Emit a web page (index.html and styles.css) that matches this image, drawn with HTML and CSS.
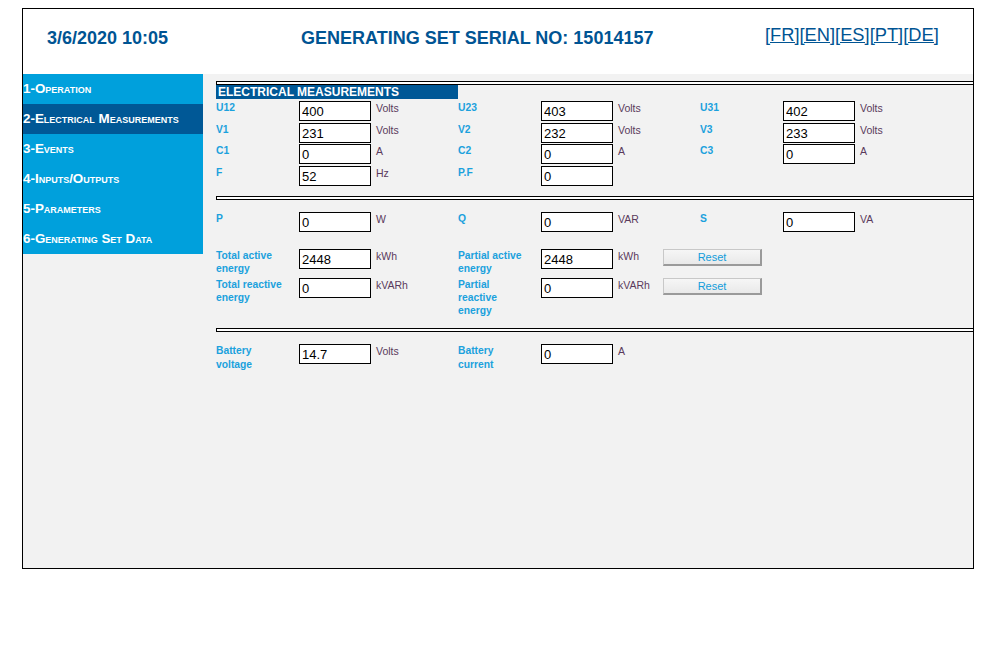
FILE: index.html
```html
<!DOCTYPE html>
<html>
<head>
<meta charset="utf-8">
<link rel="stylesheet" href="styles.css">
</head>
<body>
<div class="frame">
  <header class="top">
    <div class="date">3/6/2020 10:05</div>
    <div class="title">GENERATING SET SERIAL NO: 15014157</div>
    <div class="langs"><a href="#">[FR]</a><a href="#">[EN]</a><a href="#">[ES]</a><a href="#">[PT]</a><a href="#">[DE]</a></div>
  </header>
  <div class="main">
    <nav class="side">
      <a class="item" href="#">1-Operation</a>
      <a class="item active" href="#">2-Electrical Measurements</a>
      <a class="item" href="#">3-Events</a>
      <a class="item" href="#">4-Inputs/Outputs</a>
      <a class="item" href="#">5-Parameters</a>
      <a class="item" href="#">6-Generating Set Data</a>
    </nav>
    <section class="content">
      <div class="sep"></div>
      <div class="heading">ELECTRICAL MEASUREMENTS</div>
      <div class="rows first">
        <div class="row">
          <div class="grp"><span class="lbl">U12</span><input class="val" value="400" readonly><span class="unit">Volts</span></div>
          <div class="grp"><span class="lbl">U23</span><input class="val" value="403" readonly><span class="unit">Volts</span></div>
          <div class="grp"><span class="lbl">U31</span><input class="val" value="402" readonly><span class="unit">Volts</span></div>
        </div>
        <div class="row">
          <div class="grp"><span class="lbl">V1</span><input class="val" value="231" readonly><span class="unit">Volts</span></div>
          <div class="grp"><span class="lbl">V2</span><input class="val" value="232" readonly><span class="unit">Volts</span></div>
          <div class="grp"><span class="lbl">V3</span><input class="val" value="233" readonly><span class="unit">Volts</span></div>
        </div>
        <div class="row">
          <div class="grp"><span class="lbl">C1</span><input class="val" value="0" readonly><span class="unit">A</span></div>
          <div class="grp"><span class="lbl">C2</span><input class="val" value="0" readonly><span class="unit">A</span></div>
          <div class="grp"><span class="lbl">C3</span><input class="val" value="0" readonly><span class="unit">A</span></div>
        </div>
        <div class="row">
          <div class="grp"><span class="lbl">F</span><input class="val" value="52" readonly><span class="unit">Hz</span></div>
          <div class="grp"><span class="lbl">P.F</span><input class="val" value="0" readonly><span class="unit"></span></div>
        </div>
      </div>
      <div class="sep"></div>
      <div class="rows power">
        <div class="row">
          <div class="grp"><span class="lbl">P</span><input class="val" value="0" readonly><span class="unit">W</span></div>
          <div class="grp"><span class="lbl">Q</span><input class="val" value="0" readonly><span class="unit">VAR</span></div>
          <div class="grp"><span class="lbl">S</span><input class="val" value="0" readonly><span class="unit">VA</span></div>
        </div>
      </div>
      <div class="rows energy">
        <div class="row">
          <div class="grp"><span class="lbl">Total active energy</span><input class="val" value="2448" readonly><span class="unit">kWh</span></div>
          <div class="grp wide"><span class="lbl">Partial active energy</span><input class="val" value="2448" readonly><span class="unit fixed">kWh</span><button class="reset" type="button">Reset</button></div>
        </div>
        <div class="row">
          <div class="grp"><span class="lbl">Total reactive energy</span><input class="val" value="0" readonly><span class="unit">kVARh</span></div>
          <div class="grp wide"><span class="lbl">Partial reactive energy</span><input class="val" value="0" readonly><span class="unit fixed">kVARh</span><button class="reset" type="button">Reset</button></div>
        </div>
      </div>
      <div class="sep"></div>
      <div class="rows battery">
        <div class="row">
          <div class="grp"><span class="lbl">Battery voltage</span><input class="val" value="14.7" readonly><span class="unit">Volts</span></div>
          <div class="grp"><span class="lbl">Battery current</span><input class="val" value="0" readonly><span class="unit">A</span></div>
        </div>
      </div>
    </section>
  </div>
</div>
</body>
</html>
```

FILE: styles.css
```css
html, body {
  margin: 0;
  padding: 0;
  background: #ffffff;
}
body {
  padding: 8px 0 0 22px;
  font-family: "Liberation Sans", Arial, Helvetica, sans-serif;
}
.frame {
  width: 950px;
  height: 559px;
  border: 1px solid #000;
  background: #f2f2f2;
  display: flex;
  flex-direction: column;
}
.top {
  height: 65px;
  background: #ffffff;
  display: grid;
  grid-template-columns: 278px 464px 1fr;
  align-items: start;
  color: #005493;
  font-size: 18px;
}
.date {
  padding: 19px 0 0 24px;
  font-weight: bold;
}
.title {
  padding-top: 19px;
  font-weight: bold;
}
.langs {
  padding-top: 15px;
  font-size: 18.3px;
}
.langs a {
  color: #005493;
  text-decoration: underline;
}
.main {
  display: flex;
  flex: 1;
  align-items: flex-start;
}
.side {
  width: 180px;
  flex: none;
  background: #00a0dc;
  display: flex;
  flex-direction: column;
}
.item {
  height: 30px;
  line-height: 30px;
  color: #ffffff;
  text-decoration: none;
  font-weight: bold;
  font-size: 13.4px;
  font-variant: small-caps;
  white-space: nowrap;
}
.item.active {
  background: #005896;
}
.content {
  flex: 1;
  padding: 7px 0 0 13px;
}
.sep {
  height: 2px;
  border: 1px solid #000;
  border-right: 0;
  background: #ffffff;
}
.heading {
  width: 240px;
  height: 14px;
  line-height: 14px;
  padding-left: 2px;
  background: #005896;
  color: #ffffff;
  font-weight: bold;
  font-size: 12px;
  margin-bottom: 2px;
}
.rows {
  display: flex;
  flex-direction: column;
}
.rows.first {
  gap: 1.5px;
  margin-bottom: 10.5px;
}
.rows.power {
  margin-top: 12px;
  margin-bottom: 17px;
}
.rows.energy {
  gap: 2px;
  margin-bottom: 11px;
}
.rows.battery {
  margin-top: 12px;
}
.row {
  display: flex;
  align-items: flex-start;
}
.grp {
  width: 242px;
  flex: none;
  display: flex;
  align-items: flex-start;
}
.grp.wide {
  width: auto;
}
.lbl {
  width: 83px;
  flex: none;
  box-sizing: border-box;
  padding-right: 15px;
  color: #1ba1dd;
  font-weight: bold;
  font-size: 10.3px;
  line-height: 13.3px;
}
.val {
  width: 72px;
  height: 20px;
  flex: none;
  box-sizing: border-box;
  margin: 0;
  border: 1px solid #000;
  padding: 1px 2px 0;
  background: #ffffff;
  color: #000;
  font-family: "Liberation Sans", Arial, Helvetica, sans-serif;
  font-size: 13px;
  outline: none;
}
.unit {
  padding-left: 5px;
  margin-top: 1px;
  color: #5a3a5c;
  font-size: 10.5px;
  line-height: 13px;
}
.unit.fixed {
  width: 45px;
  flex: none;
}
.reset {
  width: 99px;
  height: 17px;
  margin: 0;
  padding: 0;
  box-sizing: border-box;
  border-top: 1px solid #c8c8c8;
  border-left: 1px solid #c8c8c8;
  border-right: 2px solid #9a9a9a;
  border-bottom: 2px solid #9a9a9a;
  background: linear-gradient(#f6f6f6, #e9e9e9);
  color: #139ddb;
  font-family: "Liberation Sans", Arial, Helvetica, sans-serif;
  font-size: 11px;
  line-height: 14px;
}
```
